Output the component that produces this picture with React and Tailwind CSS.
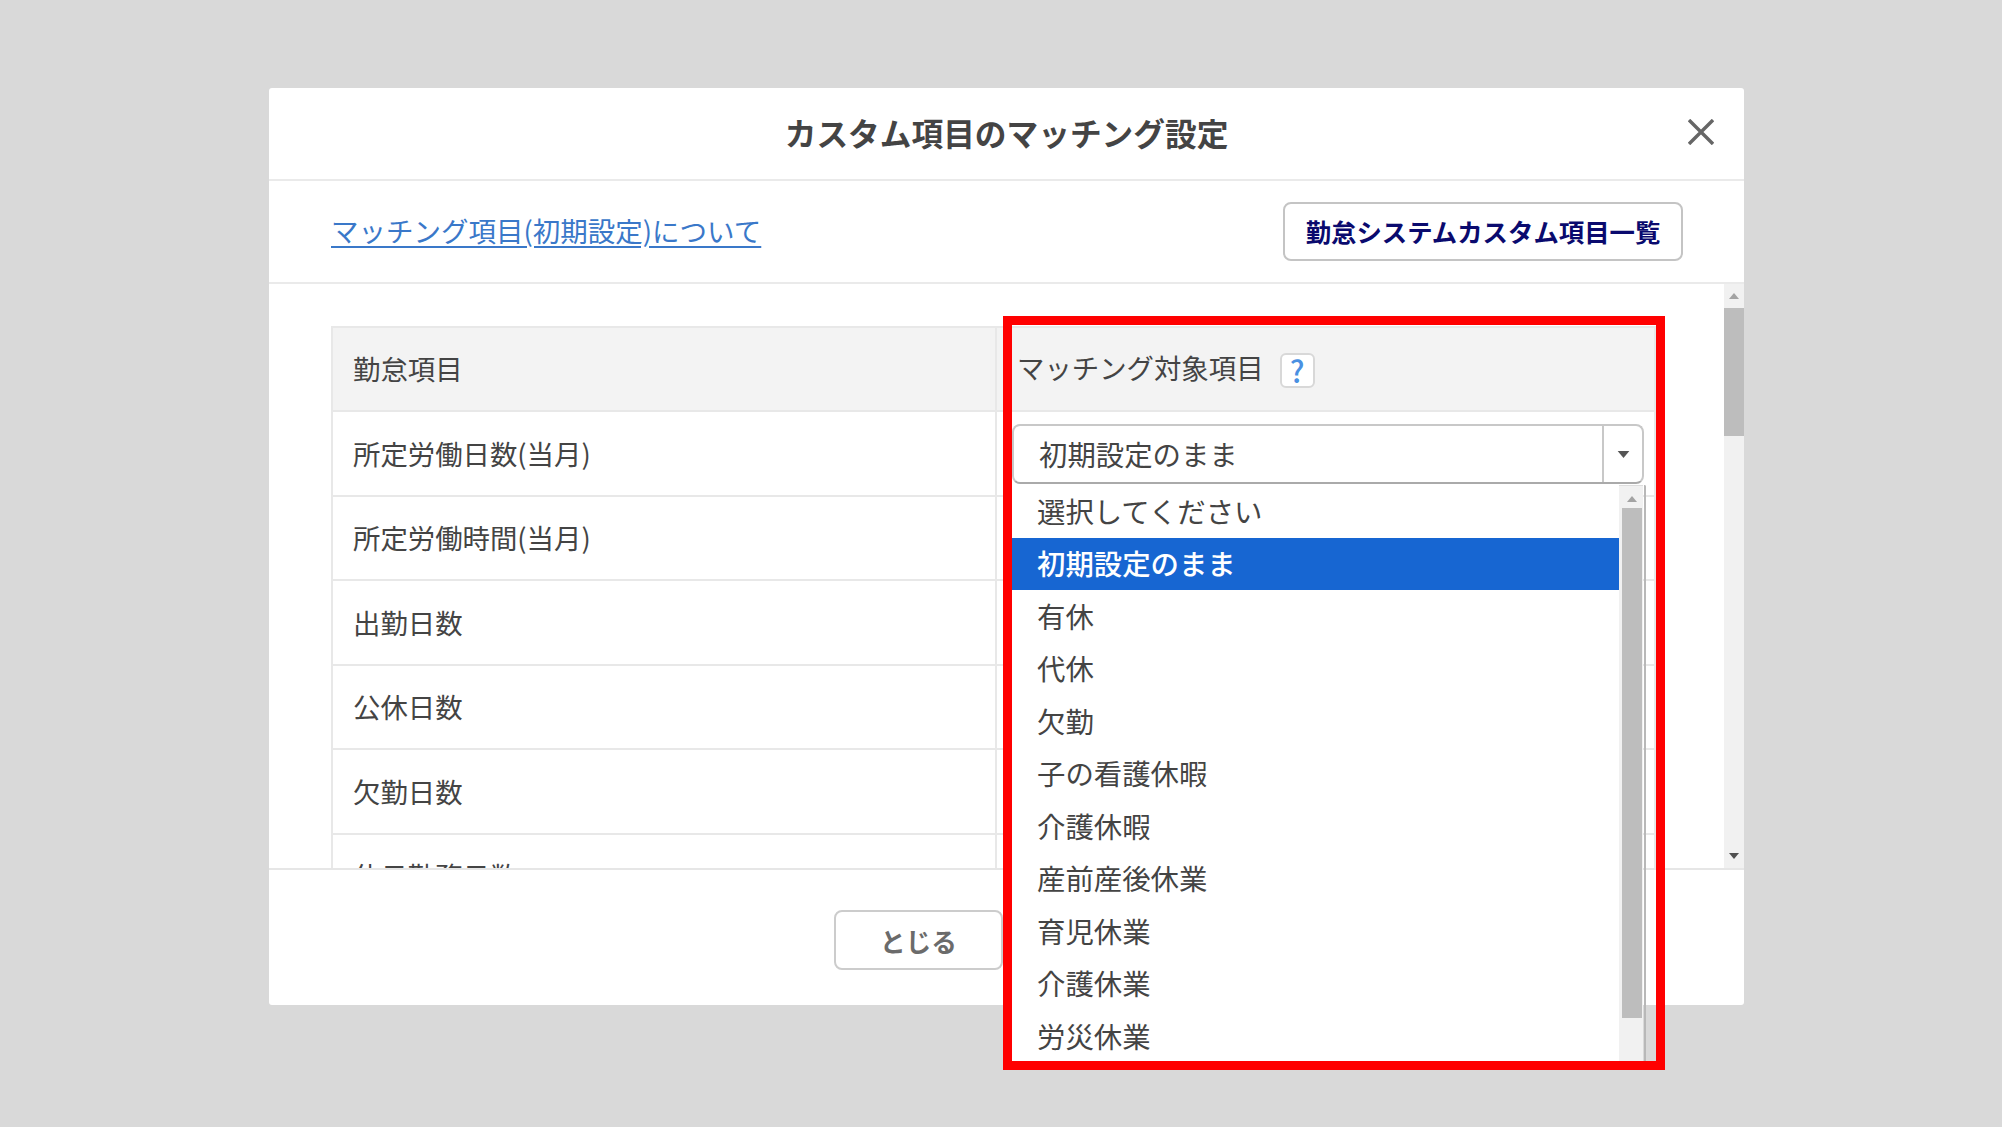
const rows = ['所定労働日数(当月)', '所定労働時間(当月)', '出勤日数', '公休日数', '欠勤日数', '休日勤務日数'];
const options = ['選択してください', '初期設定のまま', '有休', '代休', '欠勤', '子の看護休暇', '介護休暇', '産前産後休業', '育児休業', '介護休業', '労災休業'];

const Tri = ({ up, className }) => (
  <svg viewBox="0 0 10 6" className={className}>
    <path d={up ? 'M5 0L10 6H0Z' : 'M0 0H10L5 6Z'} fill="currentColor" />
  </svg>
);

export default function App() {
  return (
    <div className="relative h-[1127px] w-full overflow-hidden bg-[#d9d9d9] pl-[269px] pt-[88px] font-['Noto_Sans_CJK_JP','Noto_Sans',sans-serif] text-[#444]">
      <div className="flex h-[917px] w-[1475px] flex-col rounded-[3px] bg-white">
        {/* Title */}
        <div className="relative flex h-[93px] shrink-0 items-center justify-center border-b-2 border-[#eaeaea] pb-[2px]">
          <h1 className="text-[31.7px] font-bold text-[#444]">カスタム項目のマッチング設定</h1>
          <button className="absolute right-[30px] top-[31px] text-[#666]">
            <svg viewBox="0 0 26 26" className="h-[26px] w-[26px]" fill="none" stroke="currentColor" strokeWidth="3.4">
              <path d="M1 1L25 25M25 1L1 25" />
            </svg>
          </button>
        </div>

        {/* Link row */}
        <div className="flex h-[103px] shrink-0 items-center justify-between border-b-2 border-[#eaeaea] pl-[62px] pr-[61px]">
          <a className="mb-[2px] text-[27.5px] text-[#3a78c9] underline underline-offset-4">マッチング項目(初期設定)について</a>
          <button className="flex h-[59px] w-[400px] items-center justify-center rounded-[8px] border-2 border-[#c4c4c4] pb-[1px] text-[25.4px] font-bold text-[#0a0a6e]">
            勤怠システムカスタム項目一覧
          </button>
        </div>

        {/* Scrolling body */}
        <div className="flex h-[586px] shrink-0 overflow-hidden border-b-2 border-[#e6e6e6]">
          <div className="flex-1 overflow-hidden pl-[62px] pt-[42px]">
            <div className="w-[1325px] border-l-2 border-r-2 border-t-2 border-[#e8e8e8]">
              <div className="flex h-[84px] border-b-2 border-[#e8e8e8] bg-[#f3f3f3] text-[27.4px]">
                <div className="flex w-[664px] items-center border-r-2 border-[#e8e8e8] pl-[20px]">勤怠項目</div>
                <div className="flex flex-1 items-center pb-[3px] pl-[20px]">
                  マッチング対象項目
                  <span className="ml-[16px] mt-[6px] flex h-[35px] w-[35px] items-center justify-center rounded-[6px] border-2 border-[#d8d8d8] bg-white text-[30px] font-medium text-[#4a90e2]">?</span>
                </div>
              </div>
              {rows.map((name, i) => (
                <div key={name} className="flex h-[84.5px] border-b-2 border-[#e8e8e8] text-[27.4px]">
                  <div className="flex w-[664px] items-center border-r-2 border-[#e8e8e8] pl-[20px]">{name}</div>
                  <div className="flex-1 pl-[15px] pt-[12px]">
                    {i === 0 && (
                      <div className="flex h-[60px] w-[632px] rounded-[8px] border-2 border-[#c8c8c8] border-b-[#aaa]">
                        <span className="flex flex-1 items-center pl-[25px] text-[28.4px]">初期設定のまま</span>
                        <span className="flex w-[40px] items-center justify-center border-l-2 border-[#c8c8c8] text-[#555]">
                          <Tri className="h-[7px] w-[13px]" />
                        </span>
                      </div>
                    )}
                  </div>
                </div>
              ))}
            </div>
          </div>
          <div className="flex w-[20px] shrink-0 flex-col items-center bg-[#f1f1f1]">
            <Tri up className="mt-[9px] h-[6px] w-[10px] text-[#a3a3a3]" />
            <div className="mt-[9px] h-[128px] w-full bg-[#bdbdbd]" />
            <Tri className="mt-auto mb-[9px] h-[6px] w-[10px] text-[#505050]" />
          </div>
        </div>

        {/* Footer */}
        <div className="flex flex-1 pl-[565px] pt-[40px]">
          <button className="flex h-[60px] w-[169px] items-center justify-center rounded-[8px] border-2 border-[#cccccc] pt-[2px] text-[25.6px] font-bold text-[#6b6b6b]">
            とじる
          </button>
        </div>
      </div>

      {/* Open dropdown list */}
      <div className="absolute left-[1012px] top-[485px] flex h-[577px] w-[634px] overflow-hidden">
        <ul className="w-[607px] bg-white">
          {options.map((o, i) => (
            <li
              key={o}
              className={`flex h-[52.5px] items-center pl-[25px] text-[28.4px] ${i === 1 ? 'bg-[#1766d2] font-medium text-white' : 'text-[#444]'}`}
            >
              {o}
            </li>
          ))}
        </ul>
        <div className="flex w-[24px] flex-col items-center border-t border-[#ddd] bg-[#f1f1f1] pl-[2px]">
          <Tri up className="mt-[10px] h-[6px] w-[10px] text-[#a3a3a3]" />
          <div className="mt-[6px] h-[510px] w-[20px] bg-[#bdbdbd]" />
        </div>
        <div className="ml-[1px] w-[2px] rounded-tr-[6px] border-r-2 border-t-2 border-[#b8b8b8]" />
      </div>

      {/* Red highlight frame */}
      <div className="pointer-events-none absolute left-[1003px] top-[316px] h-[754px] w-[662px] border-[9px] border-[#ff0000]" />
    </div>
  );
}
